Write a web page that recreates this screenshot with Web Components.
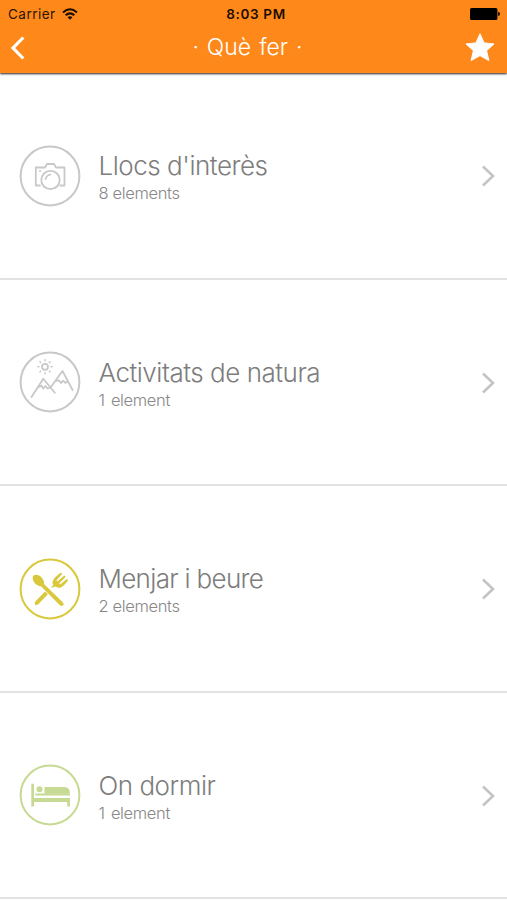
<!DOCTYPE html>
<html lang="ca">
<head>
<meta charset="utf-8">
<title>Què fer</title>
<style>
body{margin:0;background:#fff;font-family:Inter,"Liberation Sans",sans-serif;overflow:hidden}
</style>
</head>
<body>
<app-screen></app-screen>
<script>
const define = (name, html) => customElements.define(name, class extends HTMLElement {
  constructor() {
    super();
    this.attachShadow({mode: 'open'}).innerHTML = html;
  }
});

define('status-bar', `<style>
:host{display:grid;grid-template-columns:1fr auto 1fr;align-items:center;height:27px;padding:0 7px 0 8px;color:#2b1500;font-size:13.5px;line-height:27px;box-sizing:border-box}
.left{display:flex;align-items:center;gap:6px;letter-spacing:.48px}
.left span,.time{padding-top:1px}
.time{font-weight:600;font-size:13.5px;letter-spacing:.65px;color:#1c0d00;padding-left:4px}
.battery{justify-self:end}
svg{display:block}
</style>
<div class="left"><span>Carrier</span>
<svg width="16" height="12" viewBox="0 0 16 12" fill="none" stroke="#1c0d00" stroke-width="2"><path d="M1 4.4Q8-1.8 15 4.4M3.6 7.3Q8 3.4 12.4 7.3"/><path d="M8 11.8L5.5 9.2Q8 7.2 10.5 9.2Z" fill="#1c0d00" stroke="none"/></svg></div>
<span class="time">8:03 PM</span>
<svg class="battery" width="30" height="12" viewBox="0 0 30 12"><rect width="27.4" height="12" rx="1.6"/><path d="M28.2 3.8Q30 4.4 30 6T28.2 8.2Z"/></svg>`);

define('nav-bar', `<style>
:host{display:grid;grid-template-columns:1fr auto 1fr;align-items:center;height:46px;padding:0 12px 0 10px;color:#fff;box-sizing:border-box}
.title{font:350 23px/40px Inter,"Liberation Sans",sans-serif;padding:0 9px 7px 0;word-spacing:1.5px;margin-right:1px}
svg{display:block;margin-bottom:6px}
.star{justify-self:end}
</style>
<svg width="15" height="24" viewBox="0 0 15 24" fill="none" stroke="#fff" stroke-width="3.2"><path d="M13.3 1.5L3 12L13.3 22.5"/></svg>
<div class="title"><slot></slot></div>
<svg class="star" width="30" height="30" viewBox="0 0 30 30" fill="#fff" stroke="#fff" stroke-width="1" stroke-linejoin="round"><path d="M15 .8L19.1 9.9L29 10.9L21.6 17.7L23.9 27.6L15 22.6L6.1 27.6L8.4 17.7L1 10.9L10.9 9.9Z"/></svg>`);

define('app-header', `<style>
:host{display:block;background:#fe8819;height:73px;position:relative;box-shadow:0 1px 2px #28201c}
</style><status-bar></status-bar><nav-bar><slot></slot></nav-bar>`);

const icons = {
  camera: ['#c8c8c8', `<g fill="none" stroke="currentColor" stroke-width="1.8" stroke-linejoin="round"><path d="M20.5 39.5H15.8V21.5H25L27 18H34L36 21.5H44.5V39.5H39.5"/><circle cx="30.5" cy="34" r="9.2"/><path d="M25.3 34Q26 29 31 28.5" stroke-width="1.5"/></g><circle cx="20" cy="25" r="1.1"/>`],
  mountains: ['#c8c8c8', `<g fill="none" stroke="currentColor" stroke-width="1.8" stroke-linejoin="round" stroke-linecap="round"><path d="M11.5 45L23.3 26.7L34.8 40.8M30.5 35.5L42.5 19L52.6 38M18.8 35L21.4 33.8L23.2 36.5L25.4 34L27.5 36.5L30.5 35.5M36.5 29L39 28.3L41 31L43.3 28.7L45.3 30.9L48 29.5"/><circle cx="25" cy="14.8" r="3"/><path d="M25 7.8V8.7M25 20.9V21.8M18 14.8H18.9M31.1 14.8H32M20 9.8L20.6 10.4M29.4 19.2L30 19.8M20 19.8L20.6 19.2M29.4 10.4L30 9.8" stroke-width="1.6"/></g>`],
  cutlery: ['#d9c83c', `<path d="M13 17.2C11.4 20.6 15.4 27 21 27.3L40.2 46.4Q42.6 47.6 43.6 45.8Q43.9 44.5 42.7 43.2L24.2 25.3C24.6 18.5 16.5 13.3 13 17.2Z"/><path d="M27.9 35.2L18.5 45.1Q16.4 46.8 15 45.5Q13.9 43.9 15.8 42.1L25.1 32.5Z"/><path d="M32.2 28.8L34.9 27.6C41 30.5 43 27.5 48.2 21.2L46.8 19.9L40.1 25.4L39.2 24.5L45.7 17.8L44.3 16.5L37.4 22.5L36.5 21.6L42.2 14.8L40.8 13.5C33.8 18.8 31 22.5 33.4 26L31.1 28.6Z"/>`],
  bed: ['#c7da94', `<path d="M11.3 18.7H14V33H50V41.5H47.2V37H14V41.5H11.3Z"/><circle cx="19.5" cy="24.3" r="3"/><path d="M24.5 22H44.5Q49.5 22.2 50 27.7V28.7H24.5Z"/><path d="M15.3 28.5H50V30.6H15.3Z"/>`]
};

customElements.define('category-icon', class extends HTMLElement {
  connectedCallback() {
    const [color, art] = icons[this.getAttribute('name')];
    this.attachShadow({mode: 'open'}).innerHTML = `<style>:host{display:block;width:60px;height:60px;margin-bottom:1px;color:${color}}svg{display:block;overflow:visible}</style>
<svg width="60" height="60" viewBox="0 0 60 60" fill="currentColor"><circle cx="30" cy="30" r="29.4" fill="none" stroke="currentColor" stroke-width="2"/>${art}</svg>`;
  }
});

define('category-row', `<style>
:host{display:flex;align-items:center;height:206.5px;padding:0 12px 0 20px;box-sizing:border-box;background:linear-gradient(#e2e2e2,#e2e2e2) bottom/100% 2px no-repeat}
.text{flex:1;padding:3px 0 0 18.5px;font-weight:300;white-space:nowrap;color:#7d7d7d}
.title{font-size:26px;line-height:31px;letter-spacing:var(--track,-.47px)}
.count{font-size:16.5px;line-height:24px;letter-spacing:-.36px;color:#888}
svg{display:block}
</style>
<slot name="icon"></slot>
<div class="text"><div class="title"><slot></slot></div><div class="count"><slot name="count"></slot></div></div>
<svg width="14" height="22" viewBox="0 0 14 22" fill="none" stroke="#c4c4c4" stroke-width="2.6"><path d="M2 1.5L12 11L2 20.5"/></svg>`);

define('app-screen', `<style>
:host{display:flex;flex-direction:column;width:507px;height:900px;overflow:hidden;background:#fff}
app-header,category-row{flex:none}
.tight{--track:-.68px}
.single{word-spacing:2px}
</style>
<app-header>· Què fer ·</app-header>
<category-row><category-icon slot="icon" name="camera"></category-icon>Llocs d'interès<span slot="count">8 elements</span></category-row>
<category-row><category-icon slot="icon" name="mountains"></category-icon>Activitats de natura<span slot="count" class="single">1 element</span></category-row>
<category-row class="tight"><category-icon slot="icon" name="cutlery"></category-icon>Menjar i beure<span slot="count">2 elements</span></category-row>
<category-row><category-icon slot="icon" name="bed"></category-icon>On dormir<span slot="count" class="single">1 element</span></category-row>`);
</script>
</body>
</html>
